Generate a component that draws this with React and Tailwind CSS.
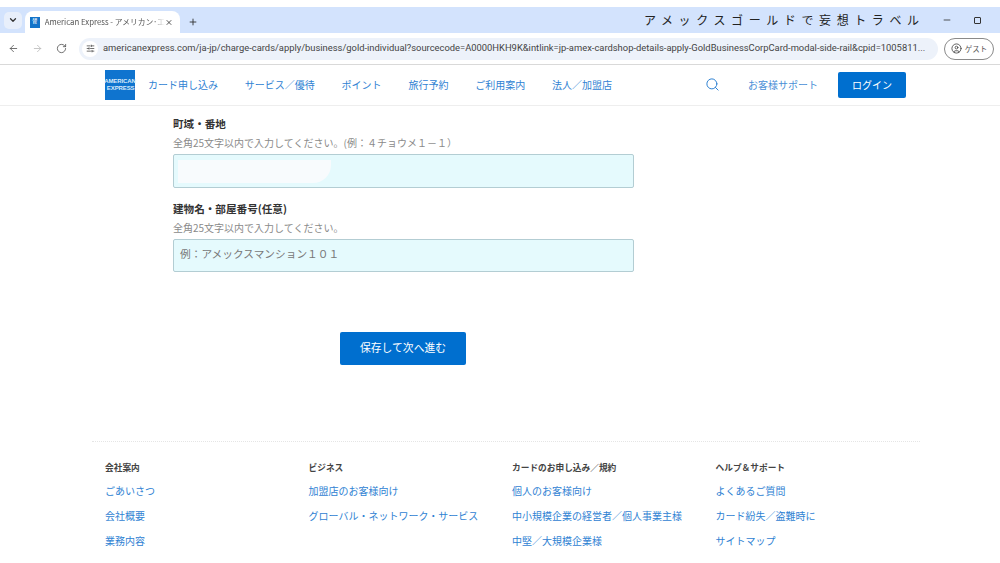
import React from "react";
import { ArrowLeft, ArrowRight, RotateCw, ChevronDown, X, Plus, Minus, SlidersHorizontal, CircleUser, Search } from "lucide-react";

const nav = ["カード申し込み", "サービス／優待", "ポイント", "旅行予約", "ご利用案内", "法人／加盟店"];
const footer = [
  { w: "w-[203.5px]", t: "会社案内", l: ["ごあいさつ", "会社概要", "業務内容"] },
  { w: "w-[203.5px]", t: "ビジネス", l: ["加盟店のお客様向け", "グローバル・ネットワーク・サービス"] },
  { w: "w-[203.5px]", t: "カードのお申し込み／規約", l: ["個人のお客様向け", "中小規模企業の経営者／個人事業主様", "中堅／大規模企業様"] },
  { w: "w-[190px]", t: "ヘルプ＆サポート", l: ["よくあるご質問", "カード紛失／盗難時に", "サイトマップ"] },
];

function Logo() {
  return (
    <div className="w-[30px] h-[30px] bg-[#0f74cf] flex flex-col items-center justify-center text-[#dcebf9] font-bold text-[6px] leading-[7px] font-['Liberation_Sans',sans-serif] tracking-[-0.1px]">
      <span>AMERICAN</span>
      <span className="self-end pr-[0.5px]">EXPRESS</span>
    </div>
  );
}

export default function App() {
  return (
    <div className="w-[1000px] h-[563px] overflow-hidden bg-white pt-[7px] font-['Noto_Sans_CJK_JP','Noto_Sans',sans-serif]">
      <div className="h-[26px] bg-[#d3e3fd] flex items-end">
        <div className="w-[25px] h-[26px] flex items-center justify-center">
          <div className="w-[18px] h-[17px] bg-[#e8effb] rounded-[5px] flex items-center justify-center">
            <ChevronDown size={10} strokeWidth={3} className="text-[#333]" />
          </div>
        </div>
        <div className="w-[155px] h-[22px] bg-white rounded-t-[8px] flex items-center pl-[5px] pr-[7px]">
          <div className="w-[11px] h-[11px] bg-[#1273c9] flex flex-col items-center justify-center text-white text-[3px] leading-[3px] font-bold">
            <span>AM</span><span>EX</span>
          </div>
          <span className="ml-[5px] whitespace-nowrap text-[7.8px] text-[#555] [mask-image:linear-gradient(to_right,black_90%,transparent)]">American Express - アメリカン･エ</span>
          <X size={9} strokeWidth={2.5} className="ml-auto text-[#333]" />
        </div>
        <div className="h-[22px] w-[26px] flex items-center justify-center">
          <Plus size={10} strokeWidth={2.2} className="text-[#333]" />
        </div>
        <div className="ml-[438px] h-[26px] flex items-center text-[12px] tracking-[5.6px] text-[#222] whitespace-nowrap w-[290px]">アメックスゴールドで妄想トラベル</div>
        <div className="h-[26px] w-[30px] flex items-center justify-center ml-[-2px]"><Minus size={10} className="text-[#333]" /></div>
        <div className="h-[26px] w-[30px] flex items-center justify-center">
          <div className="w-[7px] h-[7px] border border-[#333] rounded-[1px]" />
        </div>
      </div>

      <div className="h-[32px] bg-white border-b border-[#d9d9d9] flex items-center pl-[8px]">
        <ArrowLeft size={11} strokeWidth={1.8} className="text-[#555]" />
        <ArrowRight size={11} strokeWidth={1.8} className="ml-[13px] text-[#bbb]" />
        <RotateCw size={11} strokeWidth={1.8} className="ml-[13px] text-[#555]" />
        <div className="ml-[12px] w-[859px] h-[22px] rounded-full bg-[#edf2fa] flex items-center pl-[3px] pr-[10px]">
          <div className="w-[16px] h-[16px] rounded-full bg-white flex items-center justify-center shrink-0">
            <SlidersHorizontal size={9} strokeWidth={2} className="text-[#444]" />
          </div>
          <span className="ml-[5px] text-[9.4px] text-[#444] whitespace-nowrap font-['Roboto',sans-serif]">americanexpress.com/ja-jp/charge-cards/apply/business/gold-individual?sourcecode=A0000HKH9K&intlink=jp-amex-cardshop-details-apply-GoldBusinessCorpCard-modal-side-rail&cpid=1005811...</span>
        </div>
        <div className="ml-[6px] w-[50px] h-[22px] rounded-full border border-[#8a8a8a] flex items-center justify-center gap-[3px]">
          <CircleUser size={11} strokeWidth={1.8} className="text-[#444]" />
          <span className="text-[7.5px] text-[#555]">ゲスト</span>
        </div>
      </div>

      <header className="h-[41px] border-b border-[#eeeeee] flex items-center pl-[105px]">
        <Logo />
        <nav className="ml-[13px] pb-[1px] flex gap-[26.8px] text-[10px] text-[#2f82d3]">
          {nav.map((n) => <span key={n} className="whitespace-nowrap">{n}</span>)}
        </nav>
        <Search size={15} strokeWidth={1.6} className="ml-[93px] mb-[2px] text-[#2f82d3]" />
        <span className="ml-[28px] pb-[2px] text-[10px] text-[#4a8fd6] whitespace-nowrap">お客様サポート</span>
        <button className="ml-[20px] w-[68px] h-[26px] pb-[2px] bg-[#006fcf] rounded-[2px] text-white text-[10px]">ログイン</button>
      </header>

      <main className="pl-[173px]">
        <div className="pt-[10px] text-[10.6px] leading-[16px] font-bold text-[#333]">町域・番地</div>
        <div className="mt-[3px] text-[10px] leading-[15px] text-[#8a8a8a]">全角25文字以内で入力してください。(例：４チョウメ１－１）</div>
        <div className="mt-[4px] w-[461px] h-[34px] bg-[#e5fafd] border border-[#b3cdd3] rounded-[2px] pl-[4px] pt-[5px]">
          <div className="w-[153px] h-[23px] bg-[#f8fbfd] rounded-br-[18px]" />
        </div>
        <div className="mt-[13px] text-[10.6px] leading-[16px] font-bold text-[#333]">建物名・部屋番号(任意)</div>
        <div className="mt-[3px] text-[10px] leading-[15px] text-[#8a8a8a]">全角25文字以内で入力してください。</div>
        <div className="mt-[4px] w-[461px] h-[33px] bg-[#e5fafd] border border-[#b3cdd3] rounded-[2px] pl-[6px] pb-[2px] flex items-center text-[10.7px] text-[#777]">例：アメックスマンション１０１</div>
        <button className="mt-[60px] ml-[167px] w-[126px] h-[33px] pb-[2px] bg-[#006fcf] rounded-[2px] text-white text-[10.8px] block">保存して次へ進む</button>
      </main>

      <footer className="mt-[76px] ml-[92px] w-[828px] border-t border-dotted border-[#e5e5e5] pl-[13px] pt-[19px] flex">
        {footer.map((c) => (
          <div key={c.t} className={c.w}>
            <div className="text-[8.7px] leading-[14px] font-bold text-[#444] whitespace-nowrap">{c.t}</div>
            <ul className="mt-[8px] flex flex-col gap-[10px]">
              {c.l.map((x) => <li key={x} className="text-[10px] leading-[15px] text-[#2f82d3] whitespace-nowrap">{x}</li>)}
            </ul>
          </div>
        ))}
      </footer>
    </div>
  );
}
